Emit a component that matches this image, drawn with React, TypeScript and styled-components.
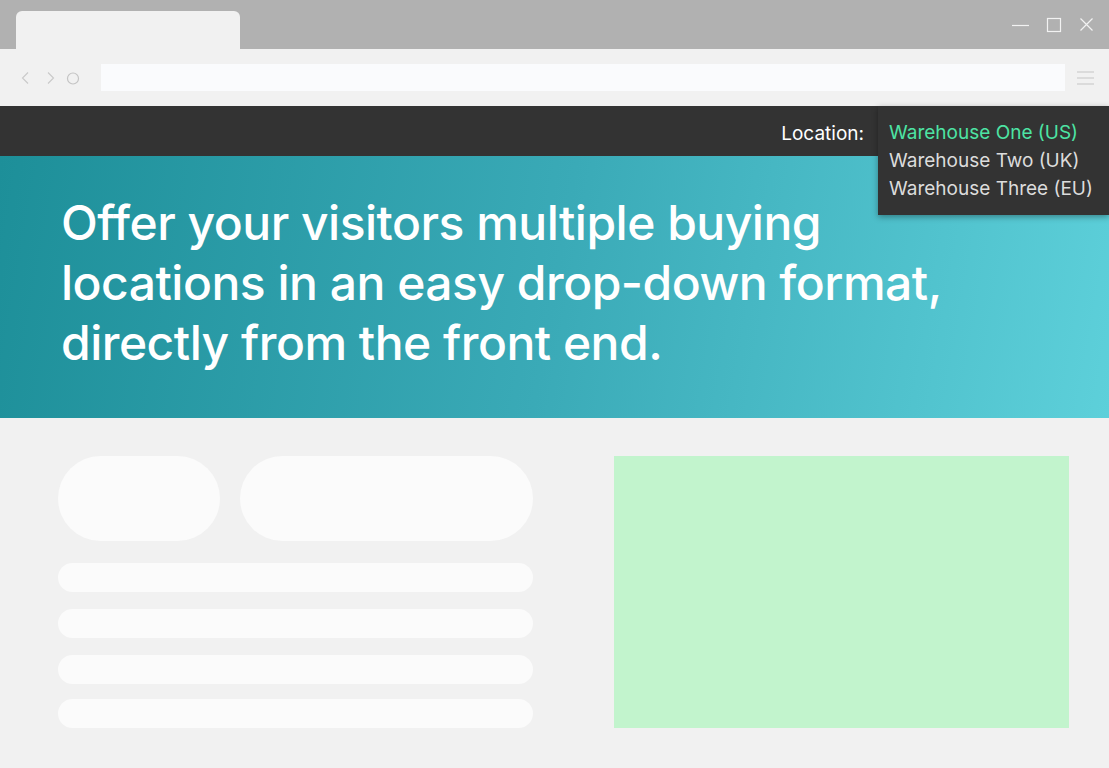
import React from "react";
import styled, { createGlobalStyle } from "styled-components";

const Global = createGlobalStyle`
  html, body { margin: 0; padding: 0; }
  body { background: #f1f1f1; font-family: Inter, "Noto Sans", sans-serif; overflow: hidden; }
  * { box-sizing: border-box; }
`;

const Window = styled.div`
  width: 1109px;
  height: 768px;
  display: flex;
  flex-direction: column;
  background: #f1f1f1;
`;

const TitleBar = styled.div`
  height: 49px;
  background: #b1b1b1;
  display: flex;
  align-items: flex-end;
  padding-left: 16px;
`;

const Tab = styled.div`
  width: 224px;
  height: 38px;
  background: #f1f1f1;
  border-radius: 6px 6px 0 0;
`;

const WinControls = styled.div`
  margin-left: auto;
  align-self: stretch;
  display: flex;
  align-items: center;
  gap: 15px;
  padding-right: 13px;
  padding-top: 3px;
`;

const CtrlIcon = styled.svg`
  width: 18px;
  height: 18px;
  display: block;
`;

const Toolbar = styled.div`
  height: 57px;
  background: #f1f1f1;
  display: flex;
  align-items: center;
  padding-left: 18px;
  padding-right: 14px;
`;

const NavIcons = styled.div`
  display: flex;
  align-items: center;
  gap: 8px;
  width: 83px;
`;

const NavIcon = styled.svg`
  width: 16px;
  height: 16px;
  display: block;
`;

const Address = styled.div`
  flex: 1;
  height: 27px;
  background: #fafbfd;
`;

const Hamburger = styled.svg`
  width: 18px;
  height: 16px;
  margin-left: 12px;
  display: block;
`;

const Page = styled.div`
  flex: 1;
  display: flex;
  flex-direction: column;
  position: relative;
`;

const Nav = styled.div`
  height: 50px;
  background: #333333;
  display: flex;
  align-items: center;
  justify-content: flex-end;
  gap: 14px;
  position: relative;
  z-index: 2;
`;

const Label = styled.span`
  color: #ffffff;
  font-size: 19px;
  font-weight: 400;
  margin-top: 4px;
`;

const DropAnchor = styled.div`
  position: relative;
  width: 231px;
  align-self: stretch;
`;

const Menu = styled.ul`
  position: absolute;
  top: 0;
  left: 0;
  right: 0;
  margin: 0;
  list-style: none;
  background: #333333;
  padding: 13px 0 12px 11px;
  box-shadow: 0 2px 6px rgba(0, 0, 0, 0.35);
`;

const MenuItem = styled.li<{ $active?: boolean }>`
  font-size: 19px;
  line-height: 28px;
  color: ${(p) => (p.$active ? "#4de4a4" : "#dcdcdc")};
  white-space: nowrap;
`;

const Hero = styled.section`
  height: 262px;
  background: linear-gradient(100deg, #1d8f99 0%, #3aaab7 50%, #5dd0da 100%);
  padding: 37px 0 0 61px;
`;

const Headline = styled.h1`
  margin: 0;
  color: #ffffff;
  font-size: 48px;
  line-height: 60px;
  font-weight: 500;
  letter-spacing: -0.5px;
  max-width: 920px;
`;

const Content = styled.div`
  display: flex;
  padding: 38px 40px 0 58px;
  gap: 81px;
`;

const LeftCol = styled.div`
  width: 475px;
  display: flex;
  flex-direction: column;
`;

const PillRow = styled.div`
  display: flex;
  gap: 20px;
  margin-bottom: 22px;
`;

const Pill = styled.div<{ $w: number }>`
  width: ${(p) => p.$w}px;
  height: 85px;
  border-radius: 43px;
  background: #fbfbfb;
`;

const Bar = styled.div<{ $mt?: number }>`
  height: 29px;
  border-radius: 15px;
  background: #fbfbfb;
  margin-top: ${(p) => p.$mt ?? 0}px;
`;

const Media = styled.div`
  width: 455px;
  height: 272px;
  background: #c2f4cd;
`;

export default function App() {
  return (
    <>
      <Global />
      <Window>
        <TitleBar>
          <Tab />
          <WinControls>
            <CtrlIcon viewBox="0 0 18 18">
              <line x1="0" y1="8.5" x2="17" y2="8.5" stroke="#f2f2f2" strokeWidth="1.2" />
            </CtrlIcon>
            <CtrlIcon viewBox="0 0 18 18">
              <rect x="2.5" y="1.5" width="13" height="13" fill="none" stroke="#f2f2f2" strokeWidth="1.2" />
            </CtrlIcon>
            <CtrlIcon viewBox="0 0 18 18">
              <path d="M2.5 1.5 L14.5 13.5 M14.5 1.5 L2.5 13.5" stroke="#f2f2f2" strokeWidth="1.2" />
            </CtrlIcon>
          </WinControls>
        </TitleBar>
        <Toolbar>
          <NavIcons>
            <NavIcon viewBox="0 0 16 16">
              <path d="M10 2.5 L4.5 8 L10 13.5" fill="none" stroke="#c9c9c9" strokeWidth="1.1" />
            </NavIcon>
            <NavIcon viewBox="0 0 16 16">
              <path d="M6 2.5 L11.5 8 L6 13.5" fill="none" stroke="#c9c9c9" strokeWidth="1.1" />
            </NavIcon>
            <NavIcon viewBox="0 0 16 16">
              <circle cx="7" cy="8.5" r="5.5" fill="none" stroke="#c4c4c4" strokeWidth="1.2" />
            </NavIcon>
          </NavIcons>
          <Address />
          <Hamburger viewBox="0 0 18 16">
            <path d="M0 2 H17 M0 8 H17 M0 14 H17" stroke="#c6c6c6" strokeWidth="1.2" />
          </Hamburger>
        </Toolbar>
        <Page>
          <Nav>
            <Label>Location:</Label>
            <DropAnchor>
              <Menu>
                <MenuItem $active>Warehouse One (US)</MenuItem>
                <MenuItem>Warehouse Two (UK)</MenuItem>
                <MenuItem>Warehouse Three (EU)</MenuItem>
              </Menu>
            </DropAnchor>
          </Nav>
          <Hero>
            <Headline>
              Offer your visitors multiple buying locations in an easy drop-down format, directly from the front end.
            </Headline>
          </Hero>
          <Content>
            <LeftCol>
              <PillRow>
                <Pill $w={162} />
                <Pill $w={293} />
              </PillRow>
              <Bar />
              <Bar $mt={17} />
              <Bar $mt={17} />
              <Bar $mt={15} />
            </LeftCol>
            <Media />
          </Content>
        </Page>
      </Window>
    </>
  );
}
